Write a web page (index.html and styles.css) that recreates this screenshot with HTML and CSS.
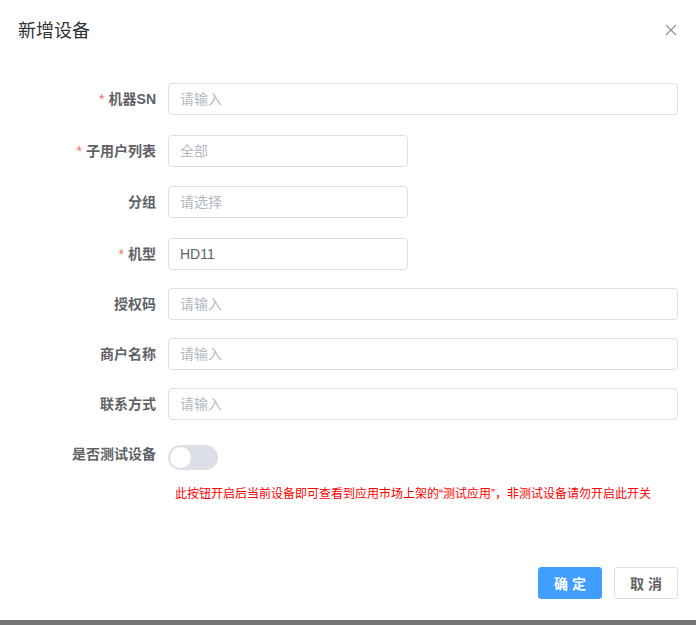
FILE: index.html
```html
<!DOCTYPE html>
<html lang="zh-CN">
<head>
    <meta charset="UTF-8">
    <meta name="viewport" content="width=device-width, initial-scale=1.0">
    <title>新增设备</title>
    <link rel="stylesheet" href="styles.css">
</head>
<body>

<div class="dialog">
    <div class="dialog-header">
        <span class="dialog-title">新增设备</span>
        <button type="button" class="dialog-close" aria-label="Close">
            <svg width="12" height="12" viewBox="0 0 12 12">
                <path d="M1 1 L11 11 M11 1 L1 11" stroke="#909399" stroke-width="1.2" fill="none"/>
            </svg>
        </button>
    </div>

    <div class="dialog-body">
        <form class="form">
            <div class="form-item gap-lg">
                <label class="form-label is-required">机器SN</label>
                <div class="form-content">
                    <input class="input" type="text" placeholder="请输入">
                </div>
            </div>
            <div class="form-item gap-md">
                <label class="form-label is-required">子用户列表</label>
                <div class="form-content">
                    <input class="input input-short" type="text" placeholder="全部">
                </div>
            </div>
            <div class="form-item gap-lg">
                <label class="form-label">分组</label>
                <div class="form-content">
                    <input class="input input-short" type="text" placeholder="请选择">
                </div>
            </div>
            <div class="form-item">
                <label class="form-label is-required">机型</label>
                <div class="form-content">
                    <input class="input input-short" type="text" value="HD11">
                </div>
            </div>
            <div class="form-item">
                <label class="form-label">授权码</label>
                <div class="form-content">
                    <input class="input" type="text" placeholder="请输入">
                </div>
            </div>
            <div class="form-item">
                <label class="form-label">商户名称</label>
                <div class="form-content">
                    <input class="input" type="text" placeholder="请输入">
                </div>
            </div>
            <div class="form-item">
                <label class="form-label">联系方式</label>
                <div class="form-content">
                    <input class="input" type="text" placeholder="请输入">
                </div>
            </div>
            <div class="form-item form-item-switch">
                <label class="form-label">是否测试设备</label>
                <div class="form-content">
                    <span class="switch"><span class="switch-knob"></span></span>
                </div>
            </div>
            <p class="form-tip">此按钮开启后当前设备即可查看到应用市场上架的“测试应用”，非测试设备请勿开启此开关</p>
        </form>
    </div>

    <div class="dialog-footer">
        <button type="button" class="btn btn-primary">确 定</button>
        <button type="button" class="btn">取 消</button>
    </div>
</div>
<div class="page-bar"></div>

</body>
</html>
```

FILE: styles.css
```css
* {
    box-sizing: border-box;
}

body {
    margin: 0;
    background-color: #fff;
    font-family: "Liberation Sans", "Noto Sans CJK SC", sans-serif;
    color: #606266;
}

.dialog {
    height: 620px;
    display: flex;
    flex-direction: column;
    background-color: #fff;
}

.dialog-header {
    display: flex;
    justify-content: space-between;
    align-items: center;
    padding: 19px 18px 10px 18px;
}

.dialog-title {
    font-size: 18px;
    line-height: 24px;
    color: #303133;
}

.dialog-close {
    border: none;
    background: none;
    padding: 0;
    width: 14px;
    height: 14px;
    cursor: pointer;
}

.dialog-body {
    flex: 1;
    padding: 30px 18px 0 0;
}

.form {
    margin: 0;
}

.form-item {
    display: flex;
    align-items: center;
    margin-bottom: 18px;
}

.form-item.gap-lg {
    margin-bottom: 20px;
}

.form-item.gap-md {
    margin-bottom: 19px;
}

.form-label {
    width: 168px;
    padding-right: 12px;
    text-align: right;
    font-size: 14px;
    font-weight: bold;
    line-height: 32px;
    color: #606266;
}

.form-label.is-required::before {
    content: "*";
    color: #f56c6c;
    margin-right: 4px;
    font-weight: normal;
}

.form-content {
    flex: 1;
}

.input {
    display: block;
    width: 100%;
    height: 32px;
    padding: 0 11px;
    border: 1px solid #dcdfe6;
    border-radius: 4px;
    font-family: inherit;
    font-size: 14px;
    color: #606266;
    outline: none;
}

.input::placeholder {
    color: #b4b8c0;
}

.input-short {
    width: 240px;
}

.form-item-switch {
    align-items: flex-start;
    margin-bottom: 0;
}

.switch {
    display: block;
    position: relative;
    width: 50px;
    height: 25px;
    margin-top: 7px;
    border-radius: 13px;
    background-color: #dcdfe6;
}

.switch-knob {
    position: absolute;
    top: 2px;
    left: 2px;
    width: 21px;
    height: 21px;
    border-radius: 50%;
    background-color: #fff;
}

.form-tip {
    margin: 16px 0 0 175px;
    font-size: 12px;
    line-height: 16px;
    color: #ff0000;
}

.dialog-footer {
    display: flex;
    justify-content: flex-end;
    gap: 12px;
    padding: 0 18px 21px 0;
}

.btn {
    width: 64px;
    height: 32px;
    border: 1px solid #dcdfe6;
    border-radius: 3px;
    background-color: #fff;
    font-family: inherit;
    font-size: 14px;
    font-weight: bold;
    color: #606266;
    cursor: pointer;
}

.btn-primary {
    background-color: #409eff;
    border-color: #409eff;
    color: #fff;
}

.page-bar {
    height: 5px;
    background-color: #757575;
}
```
